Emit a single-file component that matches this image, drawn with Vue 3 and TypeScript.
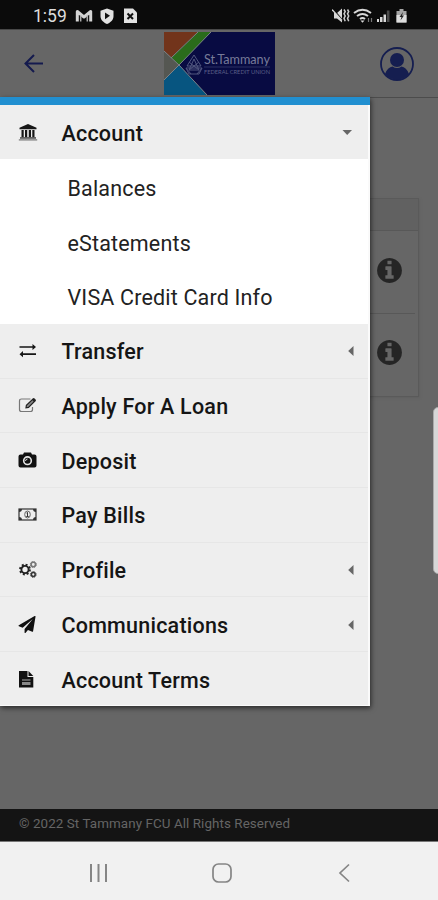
<script setup lang="ts">
import { ref } from 'vue'

type IconName = 'bank' | 'exchange' | 'edit' | 'camera' | 'money' | 'cogs' | 'plane' | 'file'

interface MenuItem {
  label: string
  icon: IconName
  children?: string[]
  expandable?: boolean
}

const open = ref('Account')
const accounts = [1, 2]

const menu: MenuItem[] = [
  { label: 'Account', icon: 'bank', expandable: true, children: ['Balances', 'eStatements', 'VISA Credit Card Info'] },
  { label: 'Transfer', icon: 'exchange', expandable: true },
  { label: 'Apply For A Loan', icon: 'edit' },
  { label: 'Deposit', icon: 'camera' },
  { label: 'Pay Bills', icon: 'money' },
  { label: 'Profile', icon: 'cogs', expandable: true },
  { label: 'Communications', icon: 'plane', expandable: true },
  { label: 'Account Terms', icon: 'file' },
]
</script>

<template>
  <div class="screen">
    <div class="status">
      <span class="clock">1:59</span>
      <svg class="status-left" width="64" height="18" viewBox="0 0 64 18">
        <path d="M2.300 14.500V4.500l6.700 5.500 6.700-5.500v10" fill="none" stroke="#d4d4d4" stroke-width="3" stroke-linejoin="round" />
        <path d="M5.700 14.500V8.500M12.300 14.500V8.500" fill="none" stroke="#aaa" stroke-width="1.500" />
        <path d="M32 1.500l6.500 2.200v5.300c0 4-3 6.500-6.500 8-3.500-1.500-6.500-4-6.500-8V3.700z" fill="#e2e2e2" />
        <path d="M30 5.500l5 3.300-5 3.500z" fill="#111" />
        <path d="M49 1.500h9l4 4V16H49z" fill="#e2e2e2" />
        <path d="M52.500 6.500l5.500 5.500M58 6.500L52.500 12" stroke="#111" stroke-width="2" />
      </svg>
      <svg class="status-right" width="76" height="18" viewBox="0 0 76 18">
        <path d="M2 6h3l5-4.500v14L5 11.500H2z" fill="#d8d8d8" />
        <path d="M1 2l11 13" stroke="#0b0b0b" stroke-width="1.200" />
        <path d="M0 2.500l10 11" stroke="#d8d8d8" stroke-width="1.200" />
        <path d="M12 2.500l1.200 2-1.200 2.300 1.200 2.200-1.200 2.300 1.200 3M15.500 2.500l1.200 2-1.200 2.300 1.200 2.200-1.200 2.300 1.200 3" fill="none" stroke="#ccc" stroke-width="1.500" />
        <path d="M22 6q8.500-6.500 17 0M25 9q5.500-4 11 0M28 12q2.500-2 5 0" fill="none" stroke="#d8d8d8" stroke-width="2" />
        <path d="M28.500 13.500h4l-2 2.200z" fill="#d8d8d8" />
        <path d="M36.500 11v4M39.500 11v4" stroke="#777" stroke-width="1.200" />
        <path d="M45 12h2v3h-2zM48 10h2.500v5H48zM51.500 7.500H54V15h-2.500z" fill="#d8d8d8" />
        <path d="M54.800 3.500H57.500V15h-2.700z" fill="#4b4b4b" />
        <path d="M67.500 2h4v2h3v11.500h-10V4h3z" fill="#a5a5a5" />
        <path d="M64.500 8h10v7.500h-10z" fill="#ddd" />
        <path d="M71 5l-3.500 5h2l-1 3.500 3.500-5h-2z" fill="#222" />
      </svg>
    </div>

    <header class="topbar">
      <svg class="back" width="20" height="20" viewBox="0 0 20 20">
        <path d="M10 1L1.500 9.500l8.500 8.500M1.500 9.500H19" fill="none" stroke="#141a4e" stroke-width="2" />
      </svg>
      <svg class="logo" width="111" height="63" viewBox="0 0 111 63">
        <rect width="111" height="63" fill="#080b42" />
        <path d="M0 0h34L7 26 0 19z" fill="#72341b" />
        <path d="M34 0h13L15 33 7 26z" fill="#2a6c1b" />
        <path d="M0 19l15 14L0 48z" fill="#555752" />
        <path d="M0 48l15-15 28 30H0z" fill="#075580" />
        <path d="M0 19l15 14L0 48M34 0L7 26M47 0L15 33l28 30" fill="none" stroke="#7d8388" stroke-width="1" />
        <g fill="none" stroke="#50567f" stroke-width="1">
          <path d="M30 23l7 11H23zM30 27l5 11H25zM25 30l10 8M35 30l-10 8M22 36h16l-3 6H25zM22 36l5 6M38 36l-5 6" />
        </g>
        <text class="logo-name" x="40" y="31.500" textLength="66" lengthAdjust="spacingAndGlyphs">St.Tammany</text>
        <path d="M40 35h66" stroke="#444a78" stroke-width=".6" />
        <text class="logo-sub" x="40" y="41.500" textLength="66" lengthAdjust="spacingAndGlyphs">FEDERAL CREDIT UNION</text>
      </svg>
      <svg class="avatar" width="34" height="34" viewBox="0 0 34 34">
        <circle cx="17" cy="17" r="16" fill="none" stroke="#151e50" stroke-width="1.800" />
        <circle cx="17" cy="13" r="7" fill="#151e50" />
        <path d="M5 27c1.500-4.500 4.500-7 7.500-7.500 3 2 6 2 9 0 3 .5 6 3 7.500 7.500-6 7.500-18 7.500-24 0z" fill="#151e50" />
      </svg>
    </header>

    <main class="content">
      <section class="table">
        <div class="table-head"></div>
        <div v-for="a in accounts" :key="a" class="table-row">
          <svg width="29" height="29" viewBox="0 0 1792 1792">
            <path fill="#252525" d="M1152 1376v-160q0-14-9-23t-23-9h-96v-512q0-14-9-23t-23-9h-320q-14 0-23 9t-9 23v160q0 14 9 23t23 9h96v320h-96q-14 0-23 9t-9 23v160q0 14 9 23t23 9h448q14 0 23-9t9-23zm-128-896v-160q0-14-9-23t-23-9h-192q-14 0-23 9t-9 23v160q0 14 9 23t23 9h192q14 0 23-9t9-23zm640 416q0 209-103 385.5t-279.5 279.5-385.5 103-385.5-103-279.5-279.5-103-385.5 103-385.5 279.5-279.5 385.5-103 385.500 103 279.500 279.500 103 385.500z" />
          </svg>
        </div>
      </section>
    </main>

    <footer class="copyright"><span>© 2022 St Tammany FCU All Rights Reserved</span></footer>

    <nav class="sysnav">
      <svg width="20" height="20" viewBox="0 0 20 20"><path d="M2 1v18M9.500 1v18M17 1v18" stroke="#858585" stroke-width="2" /></svg>
      <svg width="20" height="20" viewBox="0 0 20 20"><rect x="1" y="1" width="18" height="18" rx="5.500" fill="none" stroke="#858585" stroke-width="1.700" /></svg>
      <svg width="20" height="20" viewBox="0 0 20 20"><path d="M15 1.500L6 10l9 8.500" fill="none" stroke="#858585" stroke-width="1.700" /></svg>
    </nav>

    <aside class="drawer">
      <div class="accent"></div>
      <div class="menu">
        <template v-for="item in menu" :key="item.label">
          <div class="item" @click="open = item.label">
            <svg class="icon" width="20" height="20" viewBox="0 0 20 20">
              <g v-if="item.icon === 'bank'" fill="#161616">
                <path d="M10 1l8.500 3.700v1.500h-17V4.700z" />
                <path d="M3.500 7h2.200v7.200H3.500zM7 7h2.200v7.200H7zM10.800 7H13v7.200h-2.200zM14.300 7h2.200v7.200h-2.200z" />
                <path d="M2 14.200h16v1.500H2z" fill="#444" />
                <path d="M.8 16h18.400v1.700H.8z" fill="#999" />
              </g>
              <path v-else-if="item.icon === 'exchange'" fill="#161616" d="M1.500 5.200h13V3L18 6l-3.500 3V6.800h-13zM18 12.200H5V10l-3.500 3.200L5 16.200v-2.300h13z" />
              <g v-else-if="item.icon === 'edit'" fill="none">
                <path d="M12.500 3H3.500Q1.500 3 1.500 5v8.500q0 2 2 2h9q2 0 2-2V11" stroke="#777" stroke-width="1.200" />
                <path d="M8 11.800l.4-2.600 6.800-6.400 2 2-6.700 6.600z" fill="#888" stroke="#222" stroke-width="1.200" />
                <path d="M14 3.800l2-1.800 2 2-2 1.900z" fill="#222" />
              </g>
              <g v-else-if="item.icon === 'camera'">
                <path fill="#111" d="M2.500 3.500H5l1-2h7l1 2h2.500q2 0 2 2v9q0 2-2 2h-14q-2 0-2-2v-9q0-2 2-2z" />
                <circle cx="9.500" cy="9.700" r="3.800" fill="none" stroke="#e5e5e5" stroke-width="1.600" />
                <path d="M7.500 10q0-2 2-2" fill="none" stroke="#ddd" />
              </g>
              <g v-else-if="item.icon === 'money'" fill="none" stroke="#333">
                <rect x="1" y="4" width="17" height="11" stroke-width="1.200" />
                <path d="M1 4h3Q4 7 1 7zM18 4h-3q0 3 3 3zM1 15h3q0-3-3-3zM18 15h-3q0-3 3-3z" fill="#333" stroke="none" />
                <ellipse cx="9.500" cy="9.500" rx="2.800" ry="3.500" stroke="#666" />
                <path d="M8.500 8l1-.7v4M8.300 11.500h2.400" />
              </g>
              <g v-else-if="item.icon === 'cogs'" fill="none">
                <circle cx="7" cy="9.500" r="4.800" stroke="#222" stroke-width="2.200" stroke-dasharray="1.900 1.870" />
                <circle cx="7" cy="9.500" r="3.600" stroke="#222" stroke-width="1.900" />
                <circle cx="15.300" cy="4.500" r="2.200" stroke="#777" stroke-width="1.600" />
                <circle cx="15.300" cy="4.500" r="3" stroke="#777" stroke-width="1" stroke-dasharray="1.500 .85" />
                <circle cx="15.300" cy="14.500" r="1.900" stroke="#333" stroke-width="1.500" />
                <circle cx="15.300" cy="14.500" r="2.900" stroke="#333" stroke-width="1" stroke-dasharray="1.200 1.050" />
              </g>
              <g v-else-if="item.icon === 'plane'" transform="translate(.5 1) scale(.0095)">
                <path fill="#111" d="M1764 11q33 24 27 64l-256 1536q-5 29-32 45-14 8-31 8-11 0-24-5l-453-185-242 295q-18 23-49 23-13 0-22-4-19-7-30.500-23.500t-11.500-36.500v-349l864-1059-1069 925-395-162q-37-14-40-55-2-40 32-59l1664-960q15-9 32-9 20 0 36 11z" />
              </g>
              <g v-else>
                <path fill="#111" d="M1 1h8.500v6h5.800v10.500H1z" />
                <path fill="#111" d="M10.500 1l4.800 5h-4.800z" />
                <path d="M4 10h8.500" stroke="#aaa" stroke-width="1" />
                <path d="M4 12h8.500v3H4z" fill="#888" />
              </g>
            </svg>
            <span class="label">{{ item.label }}</span>
            <svg v-if="item.expandable" class="caret" :class="{ down: item.children && open === item.label }" width="10" height="10" viewBox="0 0 10 10">
              <path v-if="item.children && open === item.label" d="M.5 2h9.500L5.200 7z" fill="#666" />
              <path v-else d="M8.500 0v10L3.200 5z" fill="#666" />
            </svg>
          </div>
          <div v-if="item.children && open === item.label" class="submenu">
            <div v-for="child in item.children" :key="child" class="child">{{ child }}</div>
          </div>
        </template>
      </div>
    </aside>
    <div class="edge-handle"></div>
  </div>
</template>

<style>
body { margin: 0; overflow: hidden; }
</style>

<style scoped>
.screen {
  position: relative;
  width: 438px;
  height: 900px;
  display: flex;
  flex-direction: column;
  overflow: hidden;
  background: #666;
  font-family: Roboto, "Liberation Sans", sans-serif;
}
.screen svg { display: block; flex: none; }
.status {
  box-sizing: border-box;
  height: 29px;
  padding: 3px 30px 0 33px;
  display: flex;
  align-items: center;
  background: #0b0b0b;
}
.clock { width: 42px; font-size: 17.500px; line-height: 24px; color: #ddd; }
.status-right { margin-left: auto; }
.topbar {
  box-sizing: border-box;
  height: 69px;
  padding: 0 24px;
  display: flex;
  align-items: center;
  border-top: 1px solid #484848;
  border-bottom: 1px solid #4c4c4c;
}
.logo { margin-left: 120px; }
.avatar { margin-left: auto; }
.logo-name { font-family: Lato, sans-serif; font-size: 12.500px; fill: #777b99; }
.logo-sub { font-family: Lato, sans-serif; font-size: 5.500px; fill: #5a5f88; }
.content { height: 711px; box-sizing: border-box; padding: 100px 19px 0; }
.table { border: 1px solid #5a5a5a; height: 197px; box-shadow: 1px 1px 2px #606060; }
.table-head { height: 31px; background: #616161; border-bottom: 1px solid #585858; }
.table-row {
  box-sizing: border-box;
  height: 82px;
  margin-right: 3px;
  padding: 0 11px 4px 0;
  display: flex;
  align-items: center;
  justify-content: flex-end;
}
.table-row + .table-row { border-top: 1px solid #585858; height: 82px; }
.copyright {
  box-sizing: border-box;
  height: 33px;
  padding: 0 19px;
  background: #141414;
  border-bottom: 1px solid #777;
  color: #656565;
  font-size: 13.400px;
  line-height: 30px;
  letter-spacing: .08px;
  white-space: nowrap;
}
.sysnav {
  flex: 1;
  padding: 3px 84px 0 89px;
  display: flex;
  align-items: center;
  justify-content: space-between;
  background: #f1f1f1;
}
.drawer {
  position: absolute;
  left: 0;
  top: 97px;
  width: 370px;
  height: 609px;
  background: #fafafa;
  box-shadow: 1px 2px 5px rgba(0, 0, 0, .6);
}
.accent { height: 8px; background: #218fd0; }
.menu { height: 600px; margin-right: 2px; background: #eee; }
.item {
  box-sizing: border-box;
  height: 54.700px;
  padding: 1px 13.500px 0 17.500px;
  display: flex;
  align-items: center;
  border-bottom: 1px solid #e6e6e6;
}
.item:first-child { height: 54px; border-bottom: 0; }
.item:last-child { border-bottom: 0; }
.label {
  margin-left: 24px;
  padding-top: 2px;
  color: #151515;
  font-size: 21.500px;
  font-weight: 500;
  line-height: 28px;
  letter-spacing: .22px;
  white-space: nowrap;
}
.caret { margin-left: auto; }
.caret.down { margin-right: 2.500px; }
.submenu { background: #fff; height: 165px; }
.child {
  height: 54.700px;
  padding: 2px 0 0 67.500px;
  box-sizing: border-box;
  color: #222;
  font-size: 21.500px;
  font-weight: 400;
  line-height: 55px;
  letter-spacing: .17px;
  white-space: nowrap;
}
.edge-handle {
  position: absolute;
  right: -5px;
  top: 407px;
  width: 10px;
  height: 167px;
  box-sizing: border-box;
  border: 1px solid #aaa;
  border-radius: 5px;
  background: #d7d7d7;
}
</style>
